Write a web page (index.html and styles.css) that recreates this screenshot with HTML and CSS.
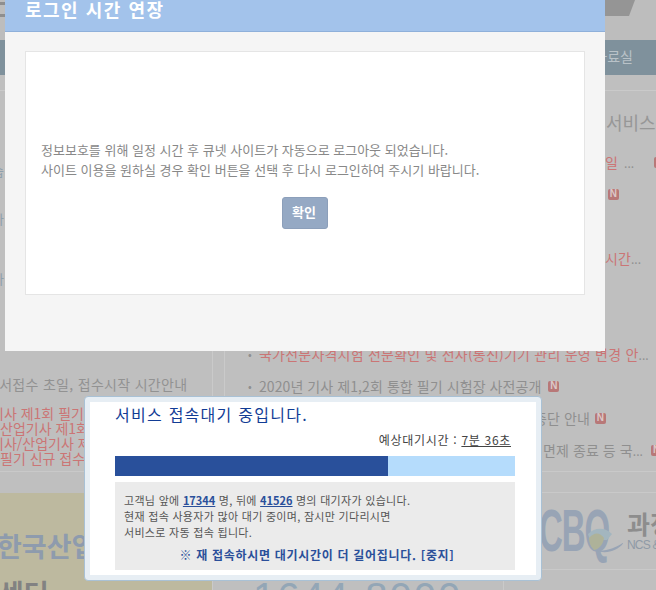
FILE: index.html
```html
<!DOCTYPE html>
<html lang="ko">
<head>
<meta charset="utf-8">
<title>로그인 시간 연장</title>
<link rel="stylesheet" href="styles.css">
</head>
<body>
<div class="page">
  <header class="top">
    <div class="top-stripes"><span></span><span></span></div>
    <div class="top-tab"></div>
  </header>
  <nav class="nav"><span class="nav-item">자료실</span></nav>
  <main class="content">
    <section class="col-left">
      <p class="side-frag">습</p>
      <p class="side-frag side-frag-dark">0</p>
      <p class="side-frag side-frag-gap">가</p>
      <p class="side-frag side-frag-gap-b">사</p>
      <p class="side-frag side-frag-dark">0</p>
      <div class="left-notices">
        <p class="left-plain">원서접수 초일, 접수시작 시간안내</p>
        <ul class="left-red">
          <li class="left-red-out">기사 제1회 필기 원서접수</li>
          <li>산업기사 제1회 필기 접수</li>
          <li class="left-red-out">기사/산업기사 제1회 접수</li>
          <li>필기 신규 접수자 안내</li>
        </ul>
      </div>
    </section>
    <section class="col-right">
      <h2 class="service-title">서비스</h2>
      <ul class="news">
        <li class="row row-far"><span class="red">일</span><span class="dots">...</span><span class="badge badge-far">N</span></li>
        <li class="row row-far-n"><span class="badge">N</span></li>
        <li class="row"></li>
        <li class="row row-far"><span class="red">시간</span><span class="dots-tight">...</span></li>
        <li class="row"></li>
        <li class="row"></li>
        <li class="row row-item"><span class="bullet">•</span><span class="red red-wide">국가전문자격시험 전문확인 및 전사(통신)기기 관리 운영 변경 안</span><span class="dots-tight">...</span></li>
        <li class="row row-item"><span class="bullet">•</span><span>2020년 기사 제1,2회 통합 필기 시험장 사전공개</span><span class="badge">N</span></li>
        <li class="row row-behind"><span>중단 안내</span><span class="badge badge-near">N</span></li>
        <li class="row row-behind-b"><span>면제 종료 등 국</span><span class="dots-tight">...</span><span class="badge badge-last">N</span></li>
      </ul>
    </section>
  </main>
  <section class="bottom">
    <div class="ad">
      <p class="ad-title">한국산업</p>
      <p class="ad-sub">센터</p>
    </div>
    <div class="bottom-right">
      <div class="banner">
        <div class="cbq">
          <span class="cbq-text">CBQ</span>
          <svg class="cbq-wave" width="36" height="26" viewBox="0 0 36 26" aria-hidden="true">
            <path d="M1 6C8-1 18-1 25 6L20 12H3z" fill="#a3b6bf"/>
            <path d="M2 10C7 4 13 4 17 10C16 18 10 22 7 22C3 18 2 14 2 10z" fill="#aeb299"/>
            <path d="M8 22C18 24 28 20 37 14C32 23 18 27 8 22z" fill="#98a4b5"/>
          </svg>
        </div>
        <div class="course">
          <span class="course-title">과정</span>
          <span class="course-sub">NCS &amp; C</span>
        </div>
      </div>
      <div class="phone"><span class="phone-num">1644-8000</span></div>
    </div>
  </section>
</div>

<div class="login-modal">
  <h1 class="login-title">로그인 시간 연장</h1>
  <div class="login-body">
    <div class="login-panel">
      <p class="login-text">정보보호를 위해 일정 시간 후 큐넷 사이트가 자동으로 로그아웃 되었습니다.<br>사이트 이용을 원하실 경우 확인 버튼을 선택 후 다시 로그인하여 주시기 바랍니다.</p>
      <button class="login-btn" type="button">확인</button>
    </div>
  </div>
</div>

<div class="wait-modal">
  <div class="wait-inner">
    <h2 class="wait-title">서비스 접속대기 중입니다.</h2>
    <p class="wait-time">예상대기시간 : <u>7분 36초</u></p>
    <div class="progress"><div class="progress-fill" style="width:68.25%"></div></div>
    <div class="wait-box">
      <p class="wait-text">고객님 앞에 <a class="num">17344</a> 명, 뒤에 <a class="num">41526</a> 명의 대기자가 있습니다.<br>현재 접속 사용자가 많아 대기 중이며, 잠시만 기다리시면<br>서비스로 자동 접속 됩니다.</p>
      <p class="wait-warn">※ 재 접속하시면 대기시간이 더 길어집니다. [중지]</p>
    </div>
  </div>
</div>
</body>
</html>
```
FILE: styles.css
```css
* { box-sizing: border-box; }
html, body { margin: 0; padding: 0; height: 100%; overflow: hidden; }
body {
  width: 656px; height: 590px; position: relative; background: #bfbfbf;
  font-family: "Noto Sans CJK KR", "Noto Sans", sans-serif; font-size: 13px; color: #8b8b8b;
}
p, h1, h2, ul { margin: 0; padding: 0; font-weight: normal; }
ul { list-style: none; }

.page { width: 656px; height: 590px; overflow: hidden; background: #bfbfbf; }

/* background page */
.top { height: 40px; display: flex; justify-content: space-between; background: #bdbdbd; }
.top-stripes { width: 5px; display: flex; flex-direction: column; gap: 9px; padding-top: 2px; }
.top-stripes span { height: 3px; background: #8f8f8f; }
.top-tab { width: 30px; height: 16px; margin-right: 21px; background: #959595; clip-path: polygon(0 0, 100% 0, 80% 100%, 0 100%); }
.nav { height: 35px; padding: 0 23px 3px 0; background: #7f919c; display: flex; justify-content: flex-end; align-items: center; color: #b9c2c8; font-size: 14px; }
.nav-item { white-space: nowrap; }

.content { height: 382px; margin-top: 15px; border-top: 1px solid #cacaca; border-bottom: 1px solid #c9c9c9; display: grid; grid-template-columns: 213px 1fr; }
.col-left { padding-top: 71px; border-right: 1px solid #cacaca; overflow: hidden; }
.side-frag { margin-left: -8px; font-size: 13px; line-height: 18px; color: #8fa0ad; }
.side-frag-dark { color: #8b8b8b; }
.side-frag-gap { margin-top: 12px; }
.side-frag-gap-b { margin-top: 42px; }
.left-notices { margin-top: 68px; }
.left-plain { margin-left: -14px; font-size: 14px; line-height: 20px; letter-spacing: 0.3px; white-space: nowrap; color: #929292; }
.left-red { margin-top: 12px; color: #cb7575; font-size: 14px; line-height: 15px; white-space: nowrap; }
.left-red-out { margin-left: -9px; }
.col-right { border-left: 1px solid #cacaca; margin-left: 11px; overflow: hidden; }
.service-title { padding: 19px 0 0 381px; font-size: 18px; line-height: 24px; color: #979797; white-space: nowrap; }
.news { margin-top: 12px; }
.row { height: 32px; display: flex; align-items: center; white-space: nowrap; font-size: 14px; letter-spacing: 0.08px; color: #8f8f8f; }
.row-far { padding-left: 380px; }
.row-far-n { padding-left: 383px; }
.row-item { padding-left: 23px; }
.row-behind { padding-left: 309px; }
.row-behind-b { padding-left: 318px; }
.bullet { width: 11px; flex: none; font-size: 11px; color: #8f8f8f; }
.red { color: #cb7575; }
.red-wide { letter-spacing: 0.22px; }
.dots { margin-left: 6px; font-size: 12px; color: #909090; }
.dots-tight { font-size: 12px; color: #909090; }
.badge { display: inline-flex; align-items: center; justify-content: center; width: 11px; height: 11px; margin-left: 7px; border-radius: 2px; background: #b87878; color: #dcc9c9; font: bold 10px/1 "Liberation Sans", sans-serif; flex: none; }
.row-far-n .badge { margin-left: 0; }
.badge-far { margin-left: 20px; }
.badge-near { margin-left: 5px; }
.badge-last { margin-left: 8px; }

.bottom { display: grid; grid-template-columns: 212px 1fr; height: 97px; margin-top: 21px; }
.ad { background: #bdb99f; overflow: hidden; }
.ad-title { margin: 32px 0 0 -3px; font-size: 27px; font-weight: bold; line-height: 42px; color: #8e9bad; white-space: nowrap; }
.ad-sub { margin: 8px 0 0 -1px; font-size: 27px; font-weight: bold; line-height: 36px; color: #828282; white-space: nowrap; }
.bottom-right { margin-top: -1px; border-left: 1px solid #cacaca; padding-left: 11px; }
.banner { height: 78px; margin-left: -12px; padding-left: 327px; display: flex; align-items: center; gap: 4px; border-top: 1px solid #c9c9c9; border-bottom: 1px solid #c9c9c9; overflow: hidden; }
.cbq { position: relative; flex: none; width: 84px; height: 46px; }
.cbq-text { display: block; font: bold 60px/46px "Liberation Sans", sans-serif; letter-spacing: -2px; color: #98a4b5; transform: scaleX(0.55); transform-origin: left center; white-space: nowrap; }
.cbq-wave { position: absolute; left: 48px; top: 20px; }
.course { display: flex; flex-direction: column; white-space: nowrap; }
.course-title { font-size: 25px; font-weight: bold; line-height: 28px; color: #8d8d8d; }
.course-sub { font: 12px/16px "Liberation Sans", sans-serif; color: #8f9aa6; letter-spacing: -0.8px; }
.phone { height: 20px; margin-left: -12px; padding-left: 41px; overflow: hidden; }
.phone-num { display: block; width: 251px; height: 20px; border-right: 1px solid #cacaca; font: 40px/54px "Liberation Sans", sans-serif; letter-spacing: 2px; color: #93a6b6; white-space: nowrap; }

/* login modal */
.login-modal { position: absolute; left: 5px; top: -9px; width: 600px; height: 360px; background: #f5f5f5; }
.login-title { height: 41px; padding: 5px 0 0 20px; background: #a3c3eb; border-bottom: 1px solid #8fb0da; color: #fff; font-size: 18px; line-height: 26px; font-weight: bold; letter-spacing: 1.5px; }
.login-body { padding: 19px 20px; }
.login-panel { height: 244px; background: #fff; border: 1px solid #e5e5e5; padding: 88px 15px 0; text-align: center; }
.login-text { text-align: left; font-size: 13px; line-height: 20px; color: #888; white-space: nowrap; }
.login-btn { display: block; width: 46px; height: 32px; margin: 17px auto 0; padding: 0 2px 3px 0; border: 1px solid #8c9fba; border-radius: 3px; background: #95a9c4; color: #fff; font: bold 13px "Noto Sans CJK KR", sans-serif; }

/* waiting modal */
.wait-modal { position: absolute; left: 84px; top: 396px; width: 458px; height: 185px; padding: 5px; background: #e7eef4; border: 1px solid #a9c1d5; border-radius: 4px; }
.wait-inner { height: 173px; background: #fff; padding: 0 21px 0 25px; }
.wait-title { height: 26px; font-size: 16px; line-height: 24px; letter-spacing: 1.25px; color: #123c95; }
.wait-time { height: 24px; margin-bottom: 4px; padding-right: 4px; text-align: right; font-size: 12px; line-height: 24px; letter-spacing: 0.7px; color: #444; }
.progress { width: 400px; height: 20px; background: #b5dcfc; }
.progress-fill { height: 100%; background: #29509b; }
.wait-box { width: 400px; height: 88px; margin-top: 6px; padding: 10px 9px 0; background: #ebebeb; }
.wait-text { font-size: 11px; line-height: 16px; letter-spacing: 0.3px; color: #555; white-space: nowrap; }
.num { color: #2a4f9a; font-weight: bold; text-decoration: underline; letter-spacing: 0; }
.wait-warn { margin-top: 6px; padding-left: 4px; text-align: center; font-size: 12px; line-height: 18px; font-weight: bold; letter-spacing: 0.7px; color: #2a4f9a; }
```
